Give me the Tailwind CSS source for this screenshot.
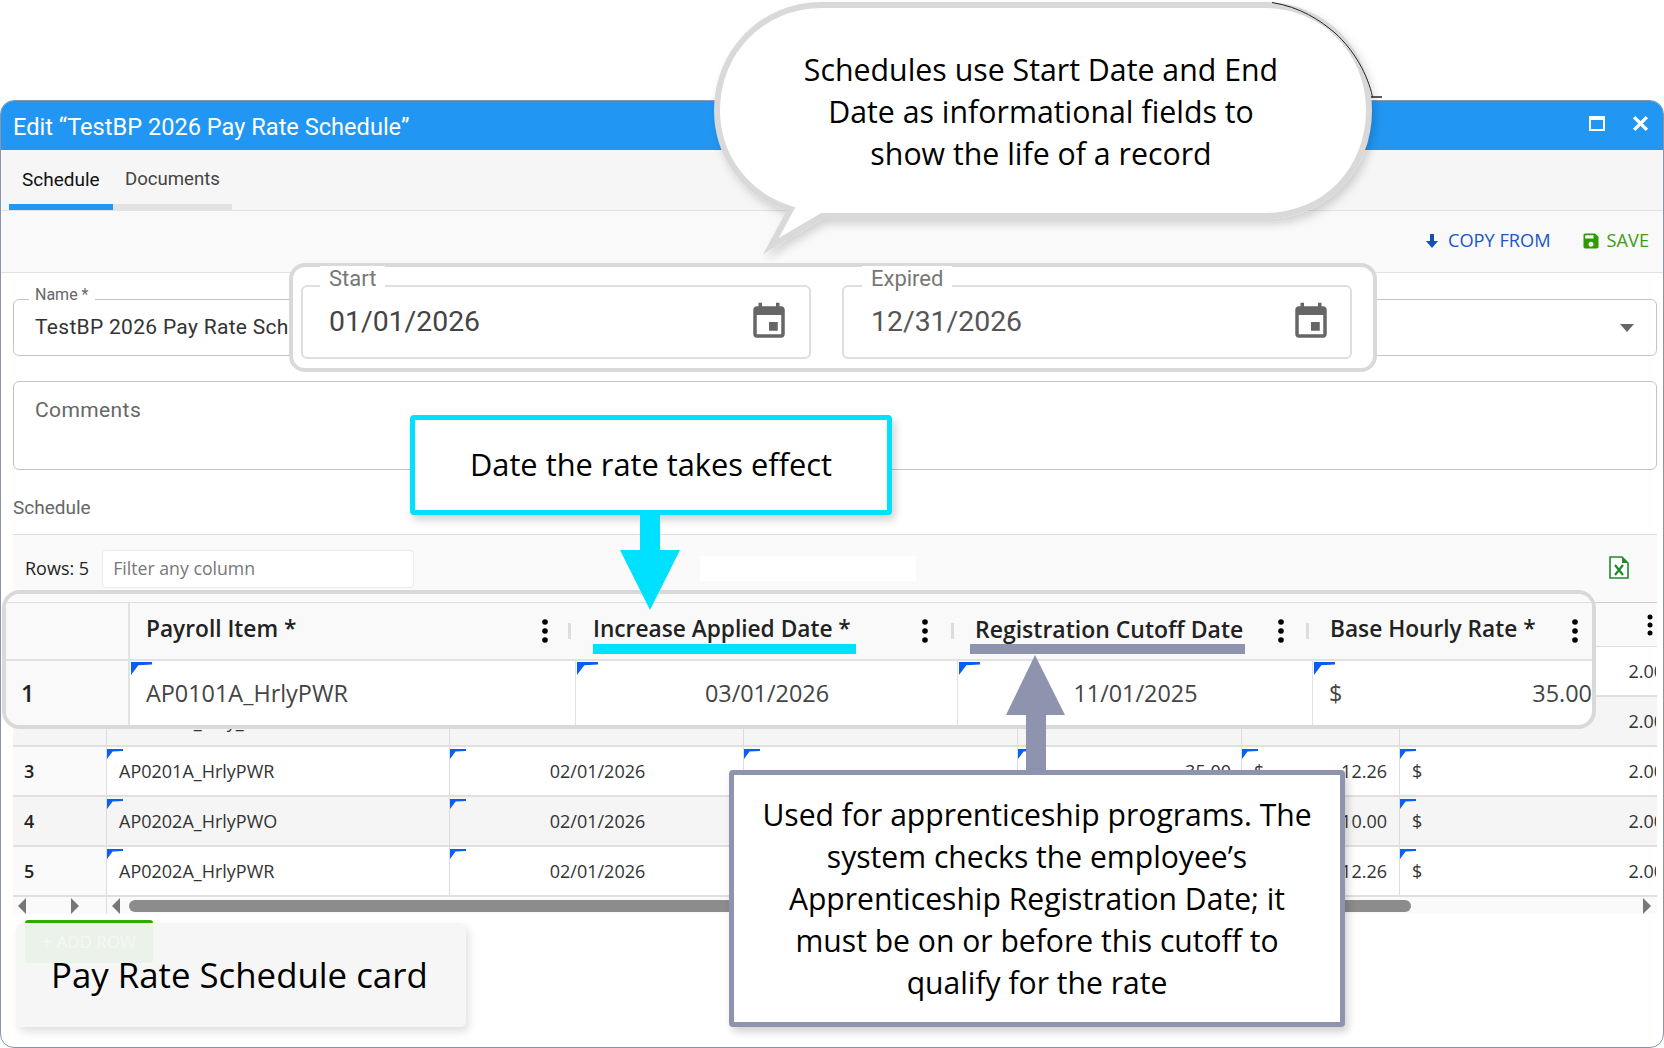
<!DOCTYPE html>
<html lang="en">
<head>
  <meta charset="UTF-8" />
  <title>Edit Pay Rate Schedule</title>
  <script src="https://cdn.jsdelivr.net/npm/@tailwindcss/browser@4"></script>
</head>
<body class="bg-white font-['Roboto',sans-serif] overflow-hidden">
<div class="relative w-[1664px] h-[1048px] overflow-hidden">

  <!-- Dialog window -->
  <div class="absolute left-0 top-[100px] w-[1664px] h-[948px] border border-[#8a94a6] rounded-[14px] overflow-hidden bg-white flex flex-col">
    <!-- Title bar -->
    <div class="h-[49px] shrink-0 bg-[#2196f3] text-white flex items-center pl-3 pr-[14px]">
      <span class="text-[23.6px] flex-1 pt-[4px]">Edit “TestBP 2026 Pay Rate Schedule”</span>
      <svg class="w-[16px] h-[15px] mr-[27px] mb-[4px]" viewBox="0 0 16 15"><rect x="1" y="1" width="14" height="13" fill="none" stroke="#fff" stroke-width="2"/><rect x="1" y="1" width="14" height="3" fill="#fff"/></svg>
      <svg class="w-[17px] h-[17px] mb-[4px]" viewBox="0 0 16 16"><path d="M2 2l12 12M14 2L2 14" stroke="#fff" stroke-width="3.2"/></svg>
    </div>
    <!-- Tabs -->
    <div class="h-[61px] shrink-0 bg-[#f6f6f6] border-b border-[#e2e2e2] pl-2 flex items-end">
      <div class="w-[104px] h-[60px] border-b-[6px] border-[#2196f3] pl-[13px] pt-[16px] text-[19px] text-[#111]">Schedule</div>
      <div class="w-[119px] h-[60px] border-b-[6px] border-[#e3e3e3] pl-[12px] pt-[16px] text-[18.6px] text-[#444]">Documents</div>
    </div>
    <!-- Toolbar -->
    <div class="h-[62px] shrink-0 bg-[#f9f9f9] border-b border-[#e2e2e2] flex items-center justify-end pr-[14px] font-['Open_Sans',sans-serif] text-[18.2px]">
      <svg class="w-[12px] h-[14px] mr-[10px] mb-[2px]" viewBox="0 0 12 14"><path d="M4 0h4v7h4l-6 7-6-7h4z" fill="#1550b8"/></svg>
      <span class="text-[#1a56c4] mr-[30px] pb-[1px]">COPY FROM</span>
      <svg class="w-[20px] h-[20px] mr-[6px] mb-[2px]" viewBox="0 0 24 24"><path fill="#2f9a06" d="M17 3H5c-1.11 0-2 .9-2 2v14c0 1.1.89 2 2 2h14c1.1 0 2-.9 2-2V7l-4-4zm-5 16c-1.66 0-3-1.34-3-3s1.34-3 3-3 3 1.34 3 3-1.34 3-3 3zm3-10H5V5h10v4z"/></svg>
      <span class="text-[#3f9c12] pb-[1px]">SAVE</span>
    </div>

    <!-- Form -->
    <div class="flex-1 pl-3 pr-[6px] pt-[26px]">
      <div class="relative h-[57px] border border-[#c4c4c4] rounded-[6px] flex items-center pl-[21px] pr-[22px] text-[21px] text-[#333] tracking-[0.3px]">
        <span class="absolute left-[15px] top-[-17px] bg-white px-[6px] text-[16px] text-[#666] tracking-normal">Name *</span>
        <span class="flex-1 pt-[1px]">TestBP 2026 Pay Rate Schedule</span>
        <span class="w-0 h-0 border-x-[7px] border-x-transparent border-t-[8px] border-t-[#666]"></span>
      </div>
      <div class="mt-[25px] h-[89px] border border-[#c4c4c4] rounded-[6px] pl-[21px] pt-[13px] text-[21px] text-[#666] tracking-[0.4px]">Comments</div>
      <div class="mt-[25px] h-[40px] border-b border-[#dcdcdc] text-[19px] leading-[26px] text-[#666]">Schedule</div>

      <!-- Grid panel -->
      <div class="bg-[#fafafa] font-['Open_Sans',sans-serif]">
        <div class="h-[68px] border-b border-[#cfcfcf] flex items-center pl-3 pr-[28px]">
          <span class="text-[18px] font-medium text-[#222]">Rows: 5</span>
          <div class="ml-[13px] w-[312px] h-[38px] bg-white border border-[#ececec] rounded-[4px] flex items-center pl-[10px] text-[17.7px] text-[#777]">Filter any column</div>
          <div class="ml-[286px] w-[216px] h-[25px] bg-white"></div>
          <svg class="ml-auto w-[20px] h-[23px] mb-[2px]" viewBox="0 0 20 23"><path d="M1 1h12l6 6v15H1z" fill="#fff" stroke="#1f8a2c" stroke-width="1.6"/><path d="M13 1v6h6" fill="#1f8a2c"/><path d="M6 9l8 10M14 9L6 19" stroke="#1f8a2c" stroke-width="2.2"/></svg>
        </div>
        <div class="h-[44px] border-b border-[#dedede] flex items-center justify-end pr-[3px]">
          <svg class="w-[8px] h-[24px]" viewBox="0 0 8 24"><circle cx="4" cy="4" r="2.5"/><circle cx="4" cy="12" r="2.5"/><circle cx="4" cy="20" r="2.5"/></svg>
        </div>
        <div id="rows"></div>
        <!-- Scrollbar row -->
        <div class="h-[17px] flex items-center">
          <div class="w-[93px] flex items-center pl-[5px]">
            <span class="w-0 h-0 border-y-[8px] border-y-transparent border-r-[8px] border-r-[#777]"></span>
            <span class="ml-[45px] w-0 h-0 border-y-[8px] border-y-transparent border-l-[8px] border-l-[#777]"></span>
          </div>
          <div class="flex-1 h-full border-l border-[#dddddd] flex items-center pl-[5px] pr-[6px]">
            <span class="w-0 h-0 border-y-[8px] border-y-transparent border-r-[8px] border-r-[#777]"></span>
            <span class="ml-[9px] w-[1282px] h-[12px] rounded-full bg-[#8c8c8c]"></span>
            <span class="ml-auto w-0 h-0 border-y-[8px] border-y-transparent border-l-[8px] border-l-[#777]"></span>
          </div>
        </div>
      </div>

      <!-- Add row -->
      <div class="ml-[12px] mt-[6px] w-[128px] h-[43px] bg-[#2fae00] rounded-[3px] flex items-center justify-center text-white text-[17px] font-['Open_Sans',sans-serif]">+ ADD ROW</div>
    </div>
  </div>

  <!-- Speech bubble callout -->
  <svg class="absolute left-[700px] top-0 w-[700px] h-[270px]" viewBox="700 0 700 270">
    <defs><filter id="soft" x="-5%" y="-5%" width="110%" height="115%"><feDropShadow dx="3" dy="5" stdDeviation="4" flood-color="#000" flood-opacity="0.16"/></filter></defs>
    <path filter="url(#soft)" d="M822 5 H1265 C1322 5 1369 50 1369 110 C1369 170 1325 216 1265 216 H822 L771 246 L791 209 C745 195 717 155 717 110 C717 52 762 5 822 5 Z" fill="#fff" stroke="#d9d9d9" stroke-width="6" stroke-miterlimit="8"/>
    <path d="M1272 2.500 C1300 7 1320 20 1335 33 C1354 50 1368 75 1372.500 97" fill="none" stroke="#222" stroke-width="1"/>
    <path d="M1371 97h11" stroke="#222" stroke-width="1.5"/>
  </svg>
  <div class="absolute left-[717px] top-[49px] w-[648px] text-center text-[30.3px] leading-[42px] text-black font-['Open_Sans',sans-serif]">
    Schedules use Start Date and End<br />Date as informational fields to<br />show the life of a record
  </div>

  <!-- Start / Expired highlight -->
  <div class="absolute left-[289px] top-[263px] w-[1088px] h-[109px] bg-white border-[4px] border-[#d9d9d9] rounded-[16px] flex gap-[31px] pl-[8px] pt-[18px]">
    <div class="relative w-[510px] h-[74px] border-[2.500px] border-[#dedede] rounded-[6px] flex items-center justify-between pl-[26px] pr-[19px] text-[28.4px] text-[#444]">
      <span class="absolute left-[17px] top-[-21px] bg-white px-[9px] h-[26px] leading-[26px] text-[22px] text-[#777]">Start</span>
      <span>01/01/2026</span>
      <svg class="w-[42px] h-[42px]" viewBox="0 0 24 24"><path fill="#666" d="M17 12h-5v5h5v-5zM16 1v2H8V1H6v2H5c-1.11 0-1.99.9-1.99 2L3 19c0 1.1.89 2 2 2h14c1.1 0 2-.9 2-2V5c0-1.1-.9-2-2-2h-1V1h-2zm3 18H5V8h14v11z"/></svg>
    </div>
    <div class="relative w-[510px] h-[74px] border-[2.500px] border-[#dedede] rounded-[6px] flex items-center justify-between pl-[27px] pr-[18px] text-[28.4px] text-[#555]">
      <span class="absolute left-[18px] top-[-21px] bg-white px-[9px] h-[26px] leading-[26px] text-[22px] text-[#777]">Expired</span>
      <span>12/31/2026</span>
      <svg class="w-[42px] h-[42px]" viewBox="0 0 24 24"><path fill="#666" d="M17 12h-5v5h5v-5zM16 1v2H8V1H6v2H5c-1.11 0-1.99.9-1.99 2L3 19c0 1.1.89 2 2 2h14c1.1 0 2-.9 2-2V5c0-1.1-.9-2-2-2h-1V1h-2zm3 18H5V8h14v11z"/></svg>
    </div>
  </div>

  <!-- Enlarged header row highlight -->
  <div class="absolute left-[2px] top-[590px] w-[1594px] h-[139px] border-[4px] border-[#d9d9d9] rounded-[18px] overflow-hidden bg-white font-['Open_Sans',sans-serif]">
    <div class="h-[9px] bg-[#fafafa] border-b border-[#e3dcdc]"></div>
    <div class="grid grid-cols-[124px_446px_382px_355px_279px] h-[58px] bg-[#f9f9f9] border-b-[2px] border-[#e2e2e2] text-[22.7px] font-semibold text-[#222]">
      <div class="border-r-[2px] border-[#e2e2e2]"></div>
      <div class="flex items-center pl-[16px] pr-[5px]"><span class="flex-1 pb-[4px]">Payroll Item *</span>
        <svg class="w-[8px] h-[26px] mr-[19px]" viewBox="0 0 8 26"><circle cx="4" cy="4" r="2.8"/><circle cx="4" cy="13" r="2.8"/><circle cx="4" cy="22" r="2.8"/></svg><span class="w-[3px] h-[16px] bg-[#dddddd]"></span></div>
      <div class="flex items-center pl-[17px] pr-[4px]"><span class="flex-1 pb-[4px]">Increase Applied Date *</span>
        <svg class="w-[8px] h-[26px] mr-[22px]" viewBox="0 0 8 26"><circle cx="4" cy="4" r="2.8"/><circle cx="4" cy="13" r="2.8"/><circle cx="4" cy="22" r="2.8"/></svg><span class="w-[3px] h-[16px] bg-[#dddddd]"></span></div>
      <div class="flex items-center pl-[17px] pr-[4px]"><span class="flex-1 pb-[4px] text-[23px]">Registration Cutoff Date</span>
        <svg class="w-[8px] h-[26px] mr-[21px]" viewBox="0 0 8 26"><circle cx="4" cy="4" r="2.8"/><circle cx="4" cy="13" r="2.8"/><circle cx="4" cy="22" r="2.8"/></svg><span class="w-[3px] h-[16px] bg-[#dddddd]"></span></div>
      <div class="flex items-center pl-[17px] pr-[13px]"><span class="flex-1 pb-[4px]">Base Hourly Rate *</span>
        <svg class="w-[8px] h-[26px]" viewBox="0 0 8 26"><circle cx="4" cy="4" r="2.8"/><circle cx="4" cy="13" r="2.8"/><circle cx="4" cy="22" r="2.8"/></svg></div>
    </div>
    <div class="grid grid-cols-[124px_446px_382px_355px_279px] h-[64px] text-[23.4px] text-[#444]">
      <div class="bg-[#f9f9f9] border-r-[2px] border-[#e2e2e2] flex items-center pl-[15px] pt-[2px] font-semibold text-[#222]">1</div>
      <div class="relative border-r border-[#e2e2e2] flex items-center pl-[16px] pt-[2px]">
        <span class="absolute left-[1px] top-[1px] w-[21px] h-[13px] bg-[#0b5ef5] [clip-path:polygon(0_0,100%_0,100%_20%,35%_25%,0_100%)]"></span>AP0101A_HrlyPWR</div>
      <div class="relative border-r border-[#e2e2e2] flex items-center justify-center pl-[1px] pt-[2px]">
        <span class="absolute left-[1px] top-[1px] w-[21px] h-[13px] bg-[#0b5ef5] [clip-path:polygon(0_0,100%_0,100%_20%,35%_25%,0_100%)]"></span>03/01/2026</div>
      <div class="relative border-r border-[#e2e2e2] flex items-center justify-center pl-[1px] pt-[2px]">
        <span class="absolute left-[1px] top-[1px] w-[21px] h-[13px] bg-[#0b5ef5] [clip-path:polygon(0_0,100%_0,100%_20%,35%_25%,0_100%)]"></span>11/01/2025</div>
      <div class="relative flex items-center justify-between pl-[16px] pr-[0px] pt-[2px]">
        <span class="absolute left-[1px] top-[1px] w-[21px] h-[13px] bg-[#0b5ef5] [clip-path:polygon(0_0,100%_0,100%_20%,35%_25%,0_100%)]"></span><span>$</span><span>35.00</span></div>
    </div>
  </div>
  <!-- Column underlines -->
  <div class="absolute left-[593px] top-[644px] w-[263px] h-[10px] bg-[#00e0ff]"></div>
  <div class="absolute left-[970px] top-[644px] w-[275px] h-[10px] bg-[#8e93ae]"></div>

  <!-- Cyan callout -->
  <div class="absolute left-[410px] top-[415px] w-[482px] h-[100px] bg-white border-[5px] border-[#00e0ff] rounded-[4px] shadow-[3px_5px_8px_rgba(0,0,0,0.18)] flex items-center justify-center pb-[2px] text-[30.8px] text-black font-['Open_Sans',sans-serif]">Date the rate takes effect</div>
  <svg class="absolute left-[615px] top-[515px] w-[70px] h-[100px]" viewBox="0 0 70 100"><path d="M25 0h20v35h20L35 95 5 35h20z" fill="#00e0ff"/></svg>

  <!-- Grey callout -->
  <svg class="absolute left-[1000px] top-[650px] w-[70px] h-[125px]" viewBox="0 0 70 125"><path d="M35 5l30 60H46v60H26V65H6z" fill="#8e93ae"/></svg>
  <div class="absolute left-[729px] top-[770px] w-[616px] h-[257px] bg-white border-[5px] border-[#8e93ae] rounded-[4px] shadow-[3px_5px_8px_rgba(0,0,0,0.18)] flex items-center justify-center text-center text-[30.1px] leading-[42px] text-black font-['Open_Sans',sans-serif]">
    <div>Used for apprenticeship programs. The<br />system checks the employee’s<br />Apprenticeship Registration Date; it<br />must be on or before this cutoff to<br />qualify for the rate</div>
  </div>

  <!-- Card label -->
  <div class="absolute left-[16px] top-[923px] w-[450px] h-[104px] bg-[#f5f5f5]/95 rounded-[6px] shadow-[3px_5px_8px_rgba(0,0,0,0.12)] pl-[35px] pt-[28px] text-[34.8px] leading-[48px] text-black font-['Open_Sans',sans-serif]">Pay Rate Schedule card</div>
</div>

<script>
  // rows of the schedule grid behind the callouts
  const rows = [
    ["1", "AP0101A_HrlyPWR", "03/01/2026", "35.00", "12.26"],
    ["2", "AP0101A_Hrly_PWO", "02/01/2026", "35.00", "12.26"],
    ["3", "AP0201A_HrlyPWR", "02/01/2026", "35.00", "12.26"],
    ["4", "AP0202A_HrlyPWO", "02/01/2026", "35.00", "10.00"],
    ["5", "AP0202A_HrlyPWR", "02/01/2026", "35.00", "12.26"],
  ];
  const corner = '<span class="absolute left-0 top-[2px] w-[16px] h-[10px] bg-[#0b5ef5] [clip-path:polygon(0_0,100%_0,100%_20%,35%_25%,0_100%)]"></span>';
  document.getElementById("rows").innerHTML = rows.map(([n, item, date, base, fringe]) => `
    <div class="grid grid-cols-[93px_343px_294px_274px_224px_158px_257px] h-[50px] border-b-[2px] border-[#e0e0e0] text-[18px] text-[#333] ${n % 2 ? "bg-white" : "bg-[#f5f5f5]"}">
      <div class="flex items-center pl-[11px] font-semibold text-[#222] ${n % 2 ? "bg-[#fafafa]" : ""}">${n}</div>
      <div class="relative border-l border-[#dddddd] flex items-center pl-[12px] whitespace-nowrap">${corner}${item}</div>
      <div class="relative border-l border-[#dddddd] flex items-center justify-center pl-[2px]">${corner}${date}</div>
      <div class="relative border-l border-[#dddddd]">${corner}</div>
      <div class="relative border-l border-[#dddddd] flex items-center justify-end pr-[10px]">${corner}${base}</div>
      <div class="relative border-l border-[#dddddd] flex items-center justify-between pl-[12px] pr-[12px]">${corner}<span>$</span><span>${fringe}</span></div>
      <div class="relative border-l border-[#dddddd] flex items-center overflow-hidden pl-[12px]">${corner}<span>$</span><span class="ml-auto mr-[-8px]">2.00</span></div>
    </div>`).join("");
</script>
</body>
</html>
